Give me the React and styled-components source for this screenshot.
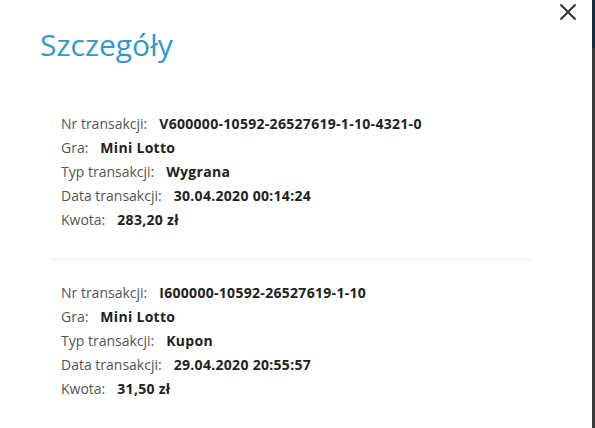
import React from "react";
import styled, { createGlobalStyle } from "styled-components";

const Global = createGlobalStyle`
  html, body { margin: 0; padding: 0; background: #fff; }
  body { font-family: "Open Sans", "Noto Sans", sans-serif; }
`;

const Page = styled.div`
  display: flex;
  width: 595px;
  height: 428px;
  overflow: hidden;
`;

const Modal = styled.div`
  position: relative;
  flex: 1;
  background: #fff;
  padding: 27px 0 0 40px;
  box-sizing: border-box;
`;

const Strip = styled.div`
  width: 3px;
  display: flex;
  flex-direction: column;
`;

const StripPart = styled.div`
  height: ${(p) => p.$h || "auto"};
  flex: ${(p) => (p.$h ? "none" : "1")};
  background: ${(p) => p.$c};
`;

const Close = styled.button`
  position: absolute;
  top: 1px;
  right: 13px;
  width: 22px;
  height: 22px;
  padding: 0;
  border: 0;
  background: none;
  display: flex;
  align-items: center;
  justify-content: center;
`;

const Title = styled.h1`
  margin: 0;
  font-size: 30px;
  line-height: 36px;
  font-weight: 400;
  color: #3399cc;
`;

const List = styled.div`
  margin: 22px 0 0 10px;
  width: 480px;
`;

const Block = styled.div`
  padding: 27px 0 27px 11px;
  & + & {
    border-top: 1px solid #ebebeb;
    padding-top: 21px;
  }
`;

const Row = styled.div`
  display: flex;
  align-items: baseline;
  font-size: 14px;
  line-height: 24px;
`;

const Label = styled.span`
  color: #555;
  margin-right: 12px;
`;

const Value = styled.span`
  color: #222;
  font-weight: 700;
  letter-spacing: 0.3px;
`;

const items = [
  [
    ["Nr transakcji:", "V600000-10592-26527619-1-10-4321-0"],
    ["Gra:", "Mini Lotto"],
    ["Typ transakcji:", "Wygrana"],
    ["Data transakcji:", "30.04.2020 00:14:24"],
    ["Kwota:", "283,20 zł"],
  ],
  [
    ["Nr transakcji:", "I600000-10592-26527619-1-10"],
    ["Gra:", "Mini Lotto"],
    ["Typ transakcji:", "Kupon"],
    ["Data transakcji:", "29.04.2020 20:55:57"],
    ["Kwota:", "31,50 zł"],
  ],
];

export default function App() {
  return (
    <>
      <Global />
      <Page>
        <Modal>
          <Close aria-label="Zamknij">
            <svg width="18" height="18" viewBox="0 0 18 18">
              <path d="M1.5 1.5 L16.5 16.5 M16.5 1.5 L1.5 16.5" stroke="#333" strokeWidth="2" />
            </svg>
          </Close>
          <Title>Szczegóły</Title>
          <List>
            {items.map((block, i) => (
              <Block key={i}>
                {block.map(([l, v]) => (
                  <Row key={l}>
                    <Label>{l}</Label>
                    <Value>{v}</Value>
                  </Row>
                ))}
              </Block>
            ))}
          </List>
        </Modal>
        <Strip>
          <StripPart $h="48px" $c="#1b2a3b" />
          <StripPart $c="#3b3b3b" />
        </Strip>
      </Page>
    </>
  );
}
